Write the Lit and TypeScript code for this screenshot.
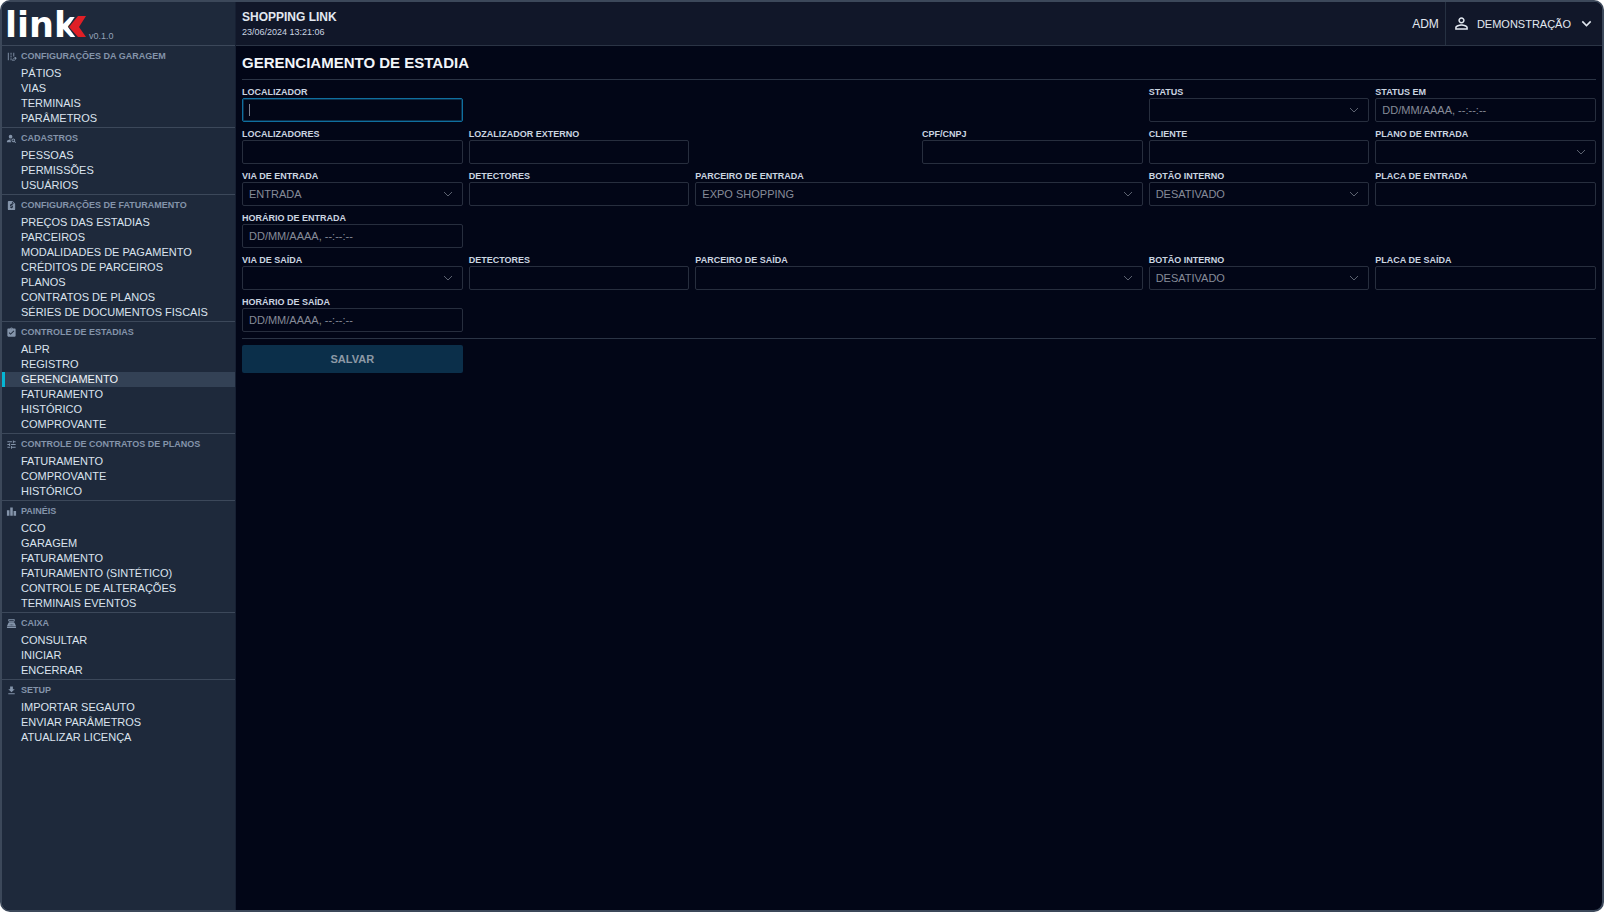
import { LitElement, html, svg, css, nothing } from "lit";
import { customElement } from "lit/decorators.js";
import { classMap } from "lit/directives/class-map.js";

interface Section {
  title: string;
  icon: string;
  items: string[];
  active?: number;
}

interface Field {
  id: string;
  label: string;
  place: string;
  kind: "text" | "select" | "date";
  value?: string;
  focused?: boolean;
}

const ICONS: Record<string, string> = {
  road: "M16 4h2v8h-2zM4 4h2v16H4zM10 4h2v4h-2zM10 10h2v4h-2zM10 16h2v4h-2zM22.560 14.780l-1.340-1.340c-.590-.590-1.540-.590-2.120 0L14 18.540V22h3.460l5.100-5.100c.590-.590.590-1.540 0-2.120zM16.850 20.500h-1.350v-1.350l3.180-3.180 1.350 1.350z",
  personSearch:
    "M10 4a4 4 0 1 0 0 8 4 4 0 0 0 0-8zM10.350 14.010C7.620 13.910 2 15.270 2 18v2h9.540c-2.470-2.760-1.230-5.890-1.190-5.990zM19.430 18.020c.360-.590.570-1.280.570-2.020 0-2.210-1.790-4-4-4s-4 1.790-4 4 1.790 4 4 4c.740 0 1.430-.220 2.020-.570L20.590 22 22 20.590l-2.570-2.570zM16 18c-1.100 0-2-.900-2-2s.900-2 2-2 2 .900 2 2-.900 2-2 2z",
  quote:
    "M14 2H6c-1.100 0-1.990.900-1.990 2L4 20c0 1.100.890 2 1.990 2H18c1.100 0 2-.900 2-2V8l-6-6zm1 9h-4v1h3c.550 0 1 .450 1 1v3c0 .550-.450 1-1 1h-1v1h-2v-1H9v-2h4v-1h-3c-.550 0-1-.450-1-1v-3c0-.550.450-1 1-1h1V8h2v1h2v2zm-2-3V3.500L17.500 8H13z",
  clipboard:
    "M19 3h-4.180C14.400 1.840 13.300 1 12 1s-2.400.840-2.820 2H5c-1.100 0-2 .900-2 2v14c0 1.100.900 2 2 2h14c1.100 0 2-.900 2-2V5c0-1.100-.900-2-2-2zm-7 0c.550 0 1 .450 1 1s-.450 1-1 1-1-.450-1-1 .450-1 1-1zm-2 14-4-4 1.410-1.410L10 14.170l6.590-6.590L18 9l-8 8z",
  tune: "M3 17v2h6v-2H3zM3 5v2h10V5H3zm10 16v-2h8v-2h-8v-2h-2v6h2zM7 9v2H3v2h4v2h2V9H7zm14 4v-2H11v2h10zm-6-4h2V7h4V5h-4V3h-2v6z",
  bars: "M7.500 21H2V9h5.500v12zm7.250-18h-5.500v18h5.500V3zM22 11h-5.500v10H22V11z",
  register:
    "M17 2H7c-1.100 0-2 .900-2 2v2c0 1.100.900 2 2 2h10c1.100 0 2-.900 2-2V4c0-1.100-.900-2-2-2zm0 4H7V4h10v2zm3 16H4c-1.100 0-2-.900-2-2v-1h20v1c0 1.100-.900 2-2 2zm-1.470-11.810C18.210 9.470 17.490 9 16.700 9H7.300c-.790 0-1.510.470-1.830 1.190L2 18h20l-3.470-7.810zM9.500 16h-1c-.280 0-.500-.220-.500-.500s.220-.500.500-.500h1c.280 0 .500.220.500.500s-.220.500-.500.500zm0-2h-1a.5.5 0 0 1 0-1h1a.5.5 0 0 1 0 1zm3 2h-1a.5.5 0 0 1 0-1h1a.5.5 0 0 1 0 1zm0-2h-1a.5.5 0 0 1 0-1h1a.5.5 0 0 1 0 1zm3 2h-1a.5.5 0 0 1 0-1h1a.5.5 0 0 1 0 1zm0-2h-1a.5.5 0 0 1 0-1h1a.5.5 0 0 1 0 1z",
  download: "M19 9h-4V3H9v6H5l7 7 7-7zM5 18v2h14v-2H5z",
  person:
    "M12 5.900c1.160 0 2.100.940 2.100 2.100s-.940 2.100-2.100 2.100S9.900 9.160 9.900 8s.940-2.100 2.100-2.100m0 9c2.970 0 6.100 1.460 6.100 2.100v1.100H5.900V17c0-.640 3.130-2.100 6.100-2.100M12 4C9.790 4 8 5.790 8 8s1.790 4 4 4 4-1.790 4-4-1.790-4-4-4zm0 9c-2.670 0-8 1.340-8 4v3h16v-3c0-2.660-5.330-4-8-4z",
  expand: "M16.590 8.590 12 13.170 7.410 8.590 6 10l6 6 6-6z",
};

const icon = (name: string, cls: string) => html`
  <svg class=${cls} viewBox="0 0 24 24" aria-hidden="true">
    ${svg`<path fill="currentColor" d=${ICONS[name]}></path>`}
  </svg>
`;

const SECTIONS: Section[] = [
  { title: "CONFIGURAÇÕES DA GARAGEM", icon: "road", items: ["PÁTIOS", "VIAS", "TERMINAIS", "PARÂMETROS"] },
  { title: "CADASTROS", icon: "personSearch", items: ["PESSOAS", "PERMISSÕES", "USUÁRIOS"] },
  {
    title: "CONFIGURAÇÕES DE FATURAMENTO",
    icon: "quote",
    items: [
      "PREÇOS DAS ESTADIAS",
      "PARCEIROS",
      "MODALIDADES DE PAGAMENTO",
      "CRÉDITOS DE PARCEIROS",
      "PLANOS",
      "CONTRATOS DE PLANOS",
      "SÉRIES DE DOCUMENTOS FISCAIS",
    ],
  },
  {
    title: "CONTROLE DE ESTADIAS",
    icon: "clipboard",
    items: ["ALPR", "REGISTRO", "GERENCIAMENTO", "FATURAMENTO", "HISTÓRICO", "COMPROVANTE"],
    active: 2,
  },
  { title: "CONTROLE DE CONTRATOS DE PLANOS", icon: "tune", items: ["FATURAMENTO", "COMPROVANTE", "HISTÓRICO"] },
  {
    title: "PAINÉIS",
    icon: "bars",
    items: [
      "CCO",
      "GARAGEM",
      "FATURAMENTO",
      "FATURAMENTO (SINTÉTICO)",
      "CONTROLE DE ALTERAÇÕES",
      "TERMINAIS EVENTOS",
    ],
  },
  { title: "CAIXA", icon: "register", items: ["CONSULTAR", "INICIAR", "ENCERRAR"] },
  { title: "SETUP", icon: "download", items: ["IMPORTAR SEGAUTO", "ENVIAR PARÂMETROS", "ATUALIZAR LICENÇA"] },
];

const FIELDS: Field[] = [
  { id: "localizador", label: "LOCALIZADOR", place: "c1", kind: "text", focused: true },
  { id: "status", label: "STATUS", place: "c5", kind: "select" },
  { id: "status-em", label: "STATUS EM", place: "c6", kind: "date" },
  { id: "localizadores", label: "LOCALIZADORES", place: "c1", kind: "text" },
  { id: "externo", label: "LOZALIZADOR EXTERNO", place: "c2", kind: "text" },
  { id: "cpf", label: "CPF/CNPJ", place: "c4", kind: "text" },
  { id: "cliente", label: "CLIENTE", place: "c5", kind: "text" },
  { id: "plano", label: "PLANO DE ENTRADA", place: "c6", kind: "select" },
  { id: "via-entrada", label: "VIA DE ENTRADA", place: "c1", kind: "select", value: "ENTRADA" },
  { id: "detectores-entrada", label: "DETECTORES", place: "c2", kind: "text" },
  { id: "parceiro-entrada", label: "PARCEIRO DE ENTRADA", place: "c3", kind: "select", value: "EXPO SHOPPING" },
  { id: "botao-entrada", label: "BOTÃO INTERNO", place: "c5", kind: "select", value: "DESATIVADO" },
  { id: "placa-entrada", label: "PLACA DE ENTRADA", place: "c6", kind: "text" },
  { id: "horario-entrada", label: "HORÁRIO DE ENTRADA", place: "c1", kind: "date" },
  { id: "via-saida", label: "VIA DE SAÍDA", place: "c1", kind: "select" },
  { id: "detectores-saida", label: "DETECTORES", place: "c2", kind: "text" },
  { id: "parceiro-saida", label: "PARCEIRO DE SAÍDA", place: "c3", kind: "select" },
  { id: "botao-saida", label: "BOTÃO INTERNO", place: "c5", kind: "select", value: "DESATIVADO" },
  { id: "placa-saida", label: "PLACA DE SAÍDA", place: "c6", kind: "text" },
  { id: "horario-saida", label: "HORÁRIO DE SAÍDA", place: "c1", kind: "date" },
];

@customElement("side-menu")
class SideMenu extends LitElement {
  static styles = css`
    :host {
      display: block;
      background: #1e293b;
      border-right: 1px solid #172033;
      border-radius: 8px 0 0 8px;
    }
    .brand {
      display: flex;
      align-items: flex-end;
      height: 43px;
      padding-left: 5px;
      gap: 2px;
      box-sizing: border-box;
    }
    .logo {
      width: 80px;
      height: 43px;
      flex: none;
      overflow: visible;
    }
    .word {
      font: 700 35px "DejaVu Sans", sans-serif;
      fill: #fff;
    }
    .version {
      font-size: 9px;
      line-height: 12px;
      padding-bottom: 3px;
      color: #94a3b8;
    }
    .section {
      border-top: 1px solid #3c485a;
      padding-bottom: 1px;
    }
    .title {
      display: flex;
      align-items: center;
      gap: 4px;
      height: 20px;
      margin: 0;
      padding-left: 4px;
      font-size: 9px;
      font-weight: 700;
      color: #8494aa;
    }
    .icon {
      width: 11px;
      height: 11px;
      flex: none;
    }
    .list {
      list-style: none;
      margin: 0;
      padding: 0;
    }
    .item {
      display: block;
      padding-left: 16px;
      border-left: 3px solid transparent;
      font-size: 11px;
      line-height: 15px;
      color: #dbe3ee;
      text-decoration: none;
      white-space: nowrap;
    }
    .item.active {
      background: #334155;
      border-left-color: #06b6d4;
      color: #f1f5f9;
    }
  `;

  render() {
    return html`
      <div class="brand">
        <svg class="logo" viewBox="0 0 80 43" role="img" aria-label="link">
          <text class="word" x="-2" y="35">link</text>
          <path fill="#1e293b" d="M69 13h11v23H69l-8-11z"></path>
          <path fill="#e01f26" d="M71 14h8l-7 11 7 10h-8l-9-10z"></path>
        </svg>
        <span class="version">v0.1.0</span>
      </div>
      <nav>
        ${SECTIONS.map(
          (s) => html`
            <section class="section">
              <h2 class="title">${icon(s.icon, "icon")}${s.title}</h2>
              <ul class="list">
                ${s.items.map(
                  (t, i) => html`<li>
                    <a
                      class=${classMap({ item: true, active: s.active === i })}
                      href="#"
                      aria-current=${s.active === i ? "page" : nothing}
                      >${t}</a
                    >
                  </li>`,
                )}
              </ul>
            </section>
          `,
        )}
      </nav>
    `;
  }
}

@customElement("stay-form")
class StayForm extends LitElement {
  static styles = css`
    :host {
      display: block;
      padding: 0 6px;
    }
    .heading {
      margin: 0;
      font-size: 15px;
      line-height: 33px;
      font-weight: 700;
      color: #f1f5f9;
    }
    .form {
      display: flex;
      flex-direction: column;
      gap: 6px;
    }
    .fields {
      display: grid;
      grid-template-columns: repeat(6, minmax(0, 1fr));
      gap: 6px;
      padding: 6px 0;
      border-top: 1px solid #2b3445;
      border-bottom: 1px solid #2b3445;
    }
    .field {
      display: grid;
      grid-template-rows: 12px 24px;
    }
    .c1 {
      grid-column: 1;
    }
    .c2 {
      grid-column: 2;
    }
    .c3 {
      grid-column: 3 / span 2;
    }
    .c4 {
      grid-column: 4;
    }
    .c5 {
      grid-column: 5;
    }
    .c6 {
      grid-column: 6;
    }
    .label {
      font-size: 9px;
      line-height: 12px;
      font-weight: 700;
      color: #cbd5e1;
      white-space: nowrap;
    }
    .control {
      grid-area: 2 / 1;
      appearance: none;
      box-sizing: border-box;
      width: 100%;
      height: 24px;
      margin: 0;
      padding: 0 6px;
      border: 1px solid #272e3e;
      border-radius: 2px;
      outline: none;
      background: transparent;
      color: #868b98;
      font: 11px "Liberation Sans", Arial, sans-serif;
    }
    .control::placeholder {
      color: #868b98;
      opacity: 1;
    }
    .focused {
      border-color: #0f6f9f;
      box-shadow: inset 0 0 0 1px #0b2f4a;
    }
    .focused:placeholder-shown {
      caret-color: transparent;
      background: linear-gradient(#7d8290, #7d8290) 6px center / 1px 12px no-repeat;
    }
    .chevron {
      grid-area: 2 / 1;
      justify-self: end;
      align-self: center;
      width: 14px;
      height: 14px;
      margin-right: 8px;
      fill: none;
      stroke: #5c6270;
      pointer-events: none;
    }
    .actions {
      display: grid;
      grid-template-columns: repeat(6, minmax(0, 1fr));
      gap: 6px;
    }
    .save {
      height: 28px;
      border: 0;
      border-radius: 2px;
      background: #0b2f4a;
      color: #8d99a6;
      font: 700 11px "Liberation Sans", Arial, sans-serif;
    }
  `;

  firstUpdated() {
    this.renderRoot.querySelector<HTMLInputElement>(".focused")?.focus();
  }

  private control(f: Field) {
    if (f.kind === "select") {
      return html`
        <select class="control" id=${f.id}>
          <option>${f.value ?? ""}</option>
        </select>
        <svg class="chevron" viewBox="0 0 14 14" aria-hidden="true">
          <path d="M3 5l4 4L11 5"></path>
        </svg>
      `;
    }
    return html`<input
      class=${classMap({ control: true, focused: !!f.focused })}
      id=${f.id}
      type="text"
      autocomplete="off"
      placeholder=${f.kind === "date" ? "DD/MM/AAAA, --:--:--" : " "}
    />`;
  }

  render() {
    return html`
      <h1 class="heading">GERENCIAMENTO DE ESTADIA</h1>
      <form class="form" @submit=${(e: Event) => e.preventDefault()}>
        <div class="fields">
          ${FIELDS.map(
            (f) => html`<div class="field ${f.place}">
              <label class="label" for=${f.id}>${f.label}</label>
              ${this.control(f)}
            </div>`,
          )}
        </div>
        <div class="actions"><button class="save" type="submit" disabled>SALVAR</button></div>
      </form>
    `;
  }
}

@customElement("app-root")
class AppRoot extends LitElement {
  static styles = css`
    :host {
      display: block;
      font-family: "Liberation Sans", Arial, sans-serif;
      background: #fff;
    }
    .frame {
      display: grid;
      grid-template-columns: 234px minmax(0, 1fr);
      box-sizing: border-box;
      min-height: 100vh;
      border: 2px solid #3c485a;
      border-radius: 10px;
      background: #020617;
    }
    .top {
      display: flex;
      align-items: stretch;
      justify-content: space-between;
      height: 44px;
      box-sizing: border-box;
      padding-left: 6px;
      background: #111729;
      border-bottom: 1px solid #2b3445;
      border-top-right-radius: 8px;
      color: #e2e8f0;
    }
    .site {
      display: flex;
      flex-direction: column;
      justify-content: center;
      gap: 2px;
      padding-top: 1px;
    }
    .name {
      font-size: 12px;
      line-height: 14px;
      font-weight: 700;
    }
    .time {
      font-size: 9px;
      line-height: 12px;
      color: #cbd5e1;
    }
    .account {
      display: flex;
    }
    .role {
      display: flex;
      align-items: center;
      padding-right: 6px;
      border-right: 1px solid #263142;
      font-size: 12px;
    }
    .user {
      display: flex;
      align-items: center;
      padding: 0 6px;
      border: 0;
      background: none;
      color: inherit;
      font: 11px "Liberation Sans", Arial, sans-serif;
    }
    .avatar {
      width: 19px;
      height: 19px;
      margin-right: 6px;
    }
    .more {
      width: 19px;
      height: 19px;
      margin-left: 6px;
    }
  `;

  render() {
    return html`
      <div class="frame">
        <side-menu></side-menu>
        <div>
          <header class="top">
            <div class="site">
              <span class="name">SHOPPING LINK</span>
              <time class="time">23/06/2024 13:21:06</time>
            </div>
            <div class="account">
              <span class="role">ADM</span>
              <button class="user" type="button">
                ${icon("person", "avatar")}DEMONSTRAÇÃO${icon("expand", "more")}
              </button>
            </div>
          </header>
          <main><stay-form></stay-form></main>
        </div>
      </div>
    `;
  }
}
